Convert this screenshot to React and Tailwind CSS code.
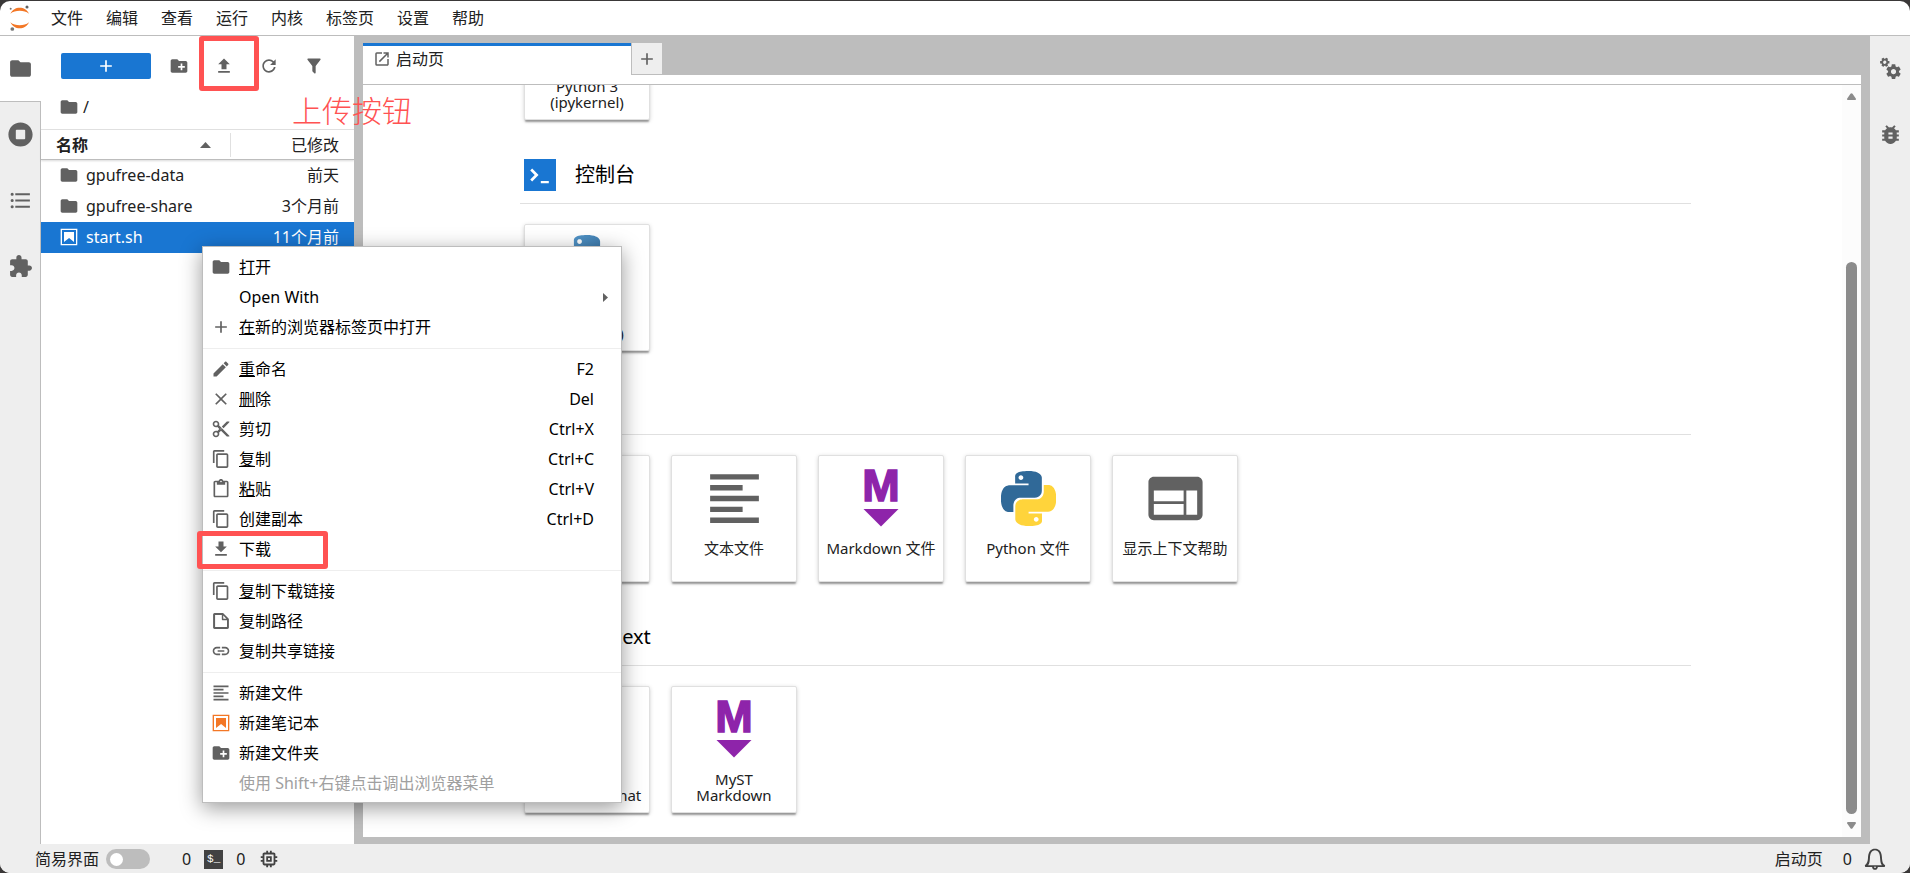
import React from "react";

const P = {
  folder: "M10 4H4c-1.1 0-1.99.9-1.99 2L2 18c0 1.1.9 2 2 2h16c1.1 0 2-.9 2-2V8c0-1.1-.9-2-2-2h-8l-2-2z",
  newFolder:
    "M20 6h-8l-2-2H4c-1.11 0-1.99.89-1.99 2L2 18c0 1.11.89 2 2 2h16c1.11 0 2-.89 2-2V8c0-1.11-.89-2-2-2zm-1 8h-3v3h-2v-3h-3v-2h3V9h2v3h3v2z",
  upload: "M9 16h6v-6h4l-7-7-7 7h4zm-4 2h14v2H5z",
  download: "M19 9h-4V3H9v6H5l7 7 7-7zM5 18v2h14v-2H5z",
  filter:
    "M14,12V19.88C14.04,20.18 13.94,20.5 13.71,20.71C13.32,21.1 12.69,21.1 12.3,20.71L10.29,18.7C10.06,18.47 9.96,18.16 10,17.87V12H9.97L4.21,4.62C3.87,4.19 3.95,3.56 4.38,3.22C4.57,3.08 4.78,3 5,3V3H19V3C19.22,3 19.43,3.08 19.62,3.22C20.05,3.56 20.13,4.19 19.79,4.62L14.03,12H14Z",
  launcher:
    "M19 19H5V5h7V3H5a2 2 0 00-2 2v14a2 2 0 002 2h14c1.1 0 2-.9 2-2v-7h-2v7zM14 3v2h3.59l-9.83 9.83 1.41 1.41L19 6.41V10h2V3h-7z",
  add: "M19 13h-6v6h-2v-6H5v-2h6V5h2v6h6v2z",
  toc: "M7,5H21V7H7V5M7,13V11H21V13H7M4,4.5A1.5,1.5 0 0,1 5.5,6A1.5,1.5 0 0,1 4,7.5A1.5,1.5 0 0,1 2.5,6A1.5,1.5 0 0,1 4,4.5M4,10.5A1.5,1.5 0 0,1 5.5,12A1.5,1.5 0 0,1 4,13.5A1.5,1.5 0 0,1 2.5,12A1.5,1.5 0 0,1 4,10.5M7,19V17H21V19H7M4,16.5A1.5,1.5 0 0,1 5.5,18A1.5,1.5 0 0,1 4,19.5A1.5,1.5 0 0,1 2.5,18A1.5,1.5 0 0,1 4,16.5Z",
  extension:
    "M20.5 11H19V7c0-1.1-.9-2-2-2h-4V3.5C13 2.12 11.88 1 10.5 1S8 2.12 8 3.5V5H4c-1.1 0-1.99.9-1.99 2v3.8H3.5c1.49 0 2.7 1.21 2.7 2.7s-1.21 2.7-2.7 2.7H2V20c0 1.1.9 2 2 2h3.8v-1.5c0-1.49 1.21-2.7 2.7-2.7 1.49 0 2.7 1.21 2.7 2.7V22H17c1.1 0 2-.9 2-2v-4h1.5c1.38 0 2.5-1.12 2.5-2.5S21.88 11 20.5 11z",
  edit: "M3 17.25V21h3.75L17.81 9.94l-3.75-3.75L3 17.25zM20.71 7.04c.39-.39.39-1.02 0-1.41l-2.34-2.34c-.39-.39-1.02-.39-1.41 0l-1.83 1.83 3.75 3.75 1.83-1.83z",
  close: "M19 6.41L17.59 5 12 10.59 6.41 5 5 6.41 10.59 12 5 17.59 6.41 19 12 13.41 17.59 19 19 17.59 13.41 12z",
  cut: "M9.64 7.64c.23-.5.36-1.05.36-1.64 0-2.21-1.79-4-4-4S2 3.79 2 6s1.79 4 4 4c.59 0 1.14-.13 1.64-.36L10 12l-2.36 2.36C7.14 14.13 6.59 14 6 14c-2.21 0-4 1.79-4 4s1.79 4 4 4 4-1.79 4-4c0-.59-.13-1.14-.36-1.64L12 14l7 7h3v-1L9.64 7.64zM6 8c-1.1 0-2-.89-2-2s.9-2 2-2 2 .89 2 2-.9 2-2 2zm0 12c-1.1 0-2-.89-2-2s.9-2 2-2 2 .89 2 2-.9 2-2 2zm6-7.5c-.28 0-.5-.22-.5-.5s.22-.5.5-.5.5.22.5.5-.22.5-.5.5zM19 3l-6 6 2 2 7-7V3z",
  paste:
    "M19 2h-4.18C14.4.84 13.3 0 12 0c-1.3 0-2.4.84-2.82 2H5c-1.1 0-2 .9-2 2v16c0 1.1.9 2 2 2h14c1.1 0 2-.9 2-2V4c0-1.1-.9-2-2-2zm-7 0c.55 0 1 .45 1 1s-.45 1-1 1-1-.45-1-1 .45-1 1-1zm7 18H5V4h2v3h10V4h2v16z",
  link: "M3.9 12c0-1.71 1.39-3.1 3.1-3.1h4V7H7c-2.76 0-5 2.24-5 5s2.24 5 5 5h4v-1.9H7c-1.71 0-3.1-1.39-3.1-3.1zM8 13h8v-2H8v2zm9-6h-4v1.9h4c1.71 0 3.1 1.39 3.1 3.1s-1.39 3.1-3.1 3.1h-4V17h4c2.76 0 5-2.24 5-5s-2.24-5-5-5z",
  lines: "M15 15H3v2h12v-2zm0-8H3v2h12V7zM3 13h18v-2H3v2zm0 8h18v-2H3v2zM3 3v2h18V3H3z",
  inspector:
    "M20 4H4c-1.1 0-1.99.9-1.99 2L2 18c0 1.1.9 2 2 2h16c1.1 0 2-.9 2-2V6c0-1.1-.9-2-2-2zm-5 14H4v-4h11v4zm0-5H4V9h11v4zm5 5h-4V9h4v9z",
  bug: "M20 8h-2.81c-.45-.78-1.07-1.45-1.82-1.96L17 4.41 15.59 3l-2.17 2.17C12.96 5.06 12.49 5 12 5c-.49 0-.96.06-1.41.17L8.41 3 7 4.41l1.62 1.63C7.88 6.55 7.26 7.22 6.81 8H4v2h2.09c-.05.33-.09.66-.09 1v1H4v2h2v1c0 .34.04.67.09 1H4v2h2.81c1.04 1.79 2.97 3 5.19 3s4.15-1.21 5.19-3H20v-2h-2.09c.05-.33.09-.66.09-1v-1h2v-2h-2v-1c0-.34-.04-.67-.09-1H20V8zm-6 8h-4v-2h4v2zm0-4h-4v-2h4v2z",
  chip: "M15 9H9v6h6V9zm-2 4h-2v-2h2v2zm8-2V9h-2V7c0-1.1-.9-2-2-2h-2V3h-2v2h-2V3H9v2H7c-1.1 0-2 .9-2 2v2H3v2h2v2H3v2h2v2c0 1.1.9 2 2 2h2v2h2v-2h2v2h2v-2h2c1.1 0 2-.9 2-2v-2h2v-2h-2v-2h2zm-4 6H7V7h10v10z",
};

const P18 = {
  refresh:
    "M9 13.5c-2.49 0-4.5-2.01-4.5-4.5S6.51 4.5 9 4.5c1.24 0 2.36.52 3.17 1.33L10 8h5V3l-1.76 1.76C12.15 3.68 10.66 3 9 3 5.69 3 3.01 5.69 3.01 9S5.69 15 9 15c2.97 0 5.43-2.16 5.9-5h-1.52c-.46 2-2.24 3.5-4.38 3.5z",
  copy: "M11.9,1H3.2C2.4,1,1.7,1.7,1.7,2.5v10.2h1.5V2.5h8.7V1z M14.1,3.9h-8c-0.8,0-1.5,0.7-1.5,1.5v10.2c0,0.8,0.7,1.5,1.5,1.5h8c0.8,0,1.5-0.7,1.5-1.5V5.4C15.5,4.6,14.9,3.9,14.1,3.9z M14.1,15.5h-8V5.4h8V15.5z",
};

const P22 = {
  file: "M19.3 8.2l-5.5-5.5c-.3-.3-.7-.5-1.2-.5H3.9c-.8.1-1.6.9-1.6 1.8v14.1c0 .9.7 1.6 1.6 1.6h14.2c.9 0 1.6-.7 1.6-1.6V9.4c.1-.5-.1-.9-.4-1.2zm-5.8-3.3l3.4 3.6h-3.4V4.9zm3.9 12.7H4.7c-.1 0-.2 0-.2-.2V4.7c0-.2.1-.3.2-.3h7.2v4.4s0 .8.3 1.1c.3.3 1.1.3 1.1.3h4.3v7.2s-.1.2-.2.2z",
  notebook:
    "M18.7 3.3v15.4H3.3V3.3h15.4m1.5-1.5H1.8v18.3h18.3l.1-18.3zM16.5 16.5l-5.4-4.3-5.6 4.3v-11h11z",
};

const GEAR =
  "M14.9 17.45C16.25 17.45 17.35 16.35 17.35 15C17.35 13.65 16.25 12.55 14.9 12.55C13.54 12.55 12.45 13.65 12.45 15C12.45 16.35 13.54 17.45 14.9 17.45ZM20.1 15.68L21.58 16.84C21.71 16.95 21.75 17.13 21.66 17.29L20.26 19.71C20.17 19.86 20 19.92 19.83 19.86L18.09 19.16C17.73 19.44 17.33 19.67 16.91 19.85L16.64 21.7C16.62 21.87 16.47 22 16.3 22H13.5C13.32 22 13.18 21.87 13.15 21.7L12.89 19.85C12.46 19.67 12.07 19.44 11.71 19.16L9.96 19.86C9.81 19.92 9.62 19.86 9.54 19.71L8.14 17.29C8.05 17.13 8.09 16.95 8.22 16.84L9.7 15.68L9.65 15L9.7 14.31L8.22 13.16C8.09 13.05 8.05 12.86 8.14 12.71L9.54 10.29C9.62 10.13 9.81 10.07 9.96 10.13L11.71 10.84C12.07 10.56 12.46 10.32 12.89 10.15L13.15 8.29C13.18 8.13 13.32 8 13.5 8H16.3C16.47 8 16.62 8.13 16.64 8.29L16.91 10.15C17.33 10.32 17.73 10.56 18.09 10.84L19.83 10.13C20 10.07 20.17 10.13 20.26 10.29L21.66 12.71C21.75 12.86 21.71 13.05 21.58 13.16L20.1 14.31L20.15 15L20.1 15.68Z";

function Icon({ name, className = "size-5 text-[#616161]" }) {
  const box = P[name] ? 24 : P18[name] ? 18 : 22;
  return (
    <svg viewBox={`0 0 ${box} ${box}`} className={`shrink-0 ${className}`} fill="currentColor" fillRule="evenodd" aria-hidden="true">
      <path d={P[name] || P18[name] || P22[name]} />
    </svg>
  );
}

function JupyterLogo() {
  return (
    <svg viewBox="0 0 66 78" className="h-[26px] w-[22px]" aria-hidden="true">
      <path d="M4 26C11 13 20 8 32 8s22 5 28 18C52 19 43 17 32 17S12 19 4 26z" fill="#f37726" />
      <path d="M4 52c7 13 16 18 28 18s22-5 28-18c-8 7-17 9-28 9s-20-2-28-9z" fill="#f37726" />
      <circle cx="54" cy="6" r="4.6" fill="#616161" />
      <circle cx="5" cy="11" r="3" fill="#757575" />
      <circle cx="10" cy="72" r="5.6" fill="#757575" />
    </svg>
  );
}

function PythonLogo({ className, soft }) {
  return (
    <svg viewBox="0 0 24 24" className={className} aria-hidden="true">
      <defs>
        <linearGradient id="pyBlue" x1="0" y1="0" x2="1" y2="1">
          <stop offset="0" stopColor="#5a9fd4" />
          <stop offset="1" stopColor="#306998" />
        </linearGradient>
      </defs>
      <path
        fill={soft ? "url(#pyBlue)" : "#306998"}
        d="M14.25.18l.9.2.73.26.59.3.45.32.34.34.25.34.16.33.1.3.04.26.02.2-.01.13V8.5l-.05.63-.13.55-.21.46-.26.38-.3.31-.33.25-.35.19-.35.14-.33.1-.3.07-.26.04-.21.02H8.77l-.69.05-.59.14-.5.22-.41.27-.33.32-.27.35-.2.36-.15.37-.1.35-.07.32-.04.27-.02.21v3.06H3.17l-.21-.03-.28-.07-.32-.12-.35-.18-.36-.26-.36-.36-.35-.46-.32-.59-.28-.73-.21-.88-.14-1.05-.05-1.23.06-1.22.16-1.04.24-.87.32-.71.36-.57.4-.44.42-.33.42-.24.4-.16.36-.1.32-.05.24-.01h.16l.06.01h8.16v-.83H6.18l-.01-2.75-.02-.37.05-.34.11-.31.17-.28.25-.26.31-.23.38-.2.44-.18.51-.15.58-.12.64-.1.71-.06.77-.04.84-.02 1.27.05zm-6.3 1.98l-.23.33-.08.41.08.41.23.34.33.22.41.09.41-.09.33-.22.23-.34.08-.41-.08-.41-.23-.33-.33-.22-.41-.09-.41.09z"
      />
      <path
        fill="#ffd43b"
        d="M21.1 6.11l.28.06.32.12.35.18.36.27.36.35.35.47.32.59.28.73.21.88.14 1.04.05 1.23-.06 1.23-.16 1.04-.24.86-.32.71-.36.57-.4.45-.42.33-.42.24-.4.16-.36.09-.32.05-.24.02-.16-.01h-8.22v.82h5.84l.01 2.76.02.36-.05.34-.11.31-.17.29-.25.25-.31.24-.38.2-.44.17-.51.15-.58.13-.64.09-.71.07-.77.04-.84.01-1.27-.04-1.07-.14-.9-.2-.73-.25-.59-.3-.45-.33-.34-.34-.25-.34-.16-.33-.1-.3-.04-.25-.02-.2.01-.13v-5.34l.05-.64.13-.54.21-.46.26-.38.3-.32.33-.24.35-.2.35-.14.33-.1.3-.06.26-.04.21-.02.13-.01h5.84l.69-.05.59-.14.5-.21.41-.28.33-.32.27-.35.2-.36.15-.36.1-.35.07-.32.04-.28.02-.21V6.07h2.09l.14.01zm-6.47 14.25l-.23.33-.08.41.08.41.23.33.33.23.41.08.41-.08.33-.23.23-.33.08-.41-.08-.41-.23-.33-.33-.23-.41-.08-.41.08z"
      />
    </svg>
  );
}

function MarkdownLogo() {
  return (
    <svg viewBox="0 -10 60 80" className="h-20 w-[60px]" fill="#8e24aa" aria-hidden="true">
      <text
        x="30"
        y="33"
        textAnchor="middle"
        fontFamily="'Liberation Sans', Arial, sans-serif"
        fontWeight="700"
        fontSize="45"
        stroke="#8e24aa"
        strokeWidth="1.5"
      >
        M
      </text>
      <path d="M12.500 41h35L30 58.500z" />
    </svg>
  );
}

function ConsoleBadge() {
  return (
    <svg viewBox="0 0 200 200" className="size-8" aria-hidden="true">
      <path fill="#1976d2" d="M0 0h200v200H0z" />
      <path fill="#fff" d="M105 137h50v14h-50zM39 72l28 28-28 28 12 12 40-40-40-40z" />
    </svg>
  );
}

function Card({ icon, children }) {
  return (
    <button
      type="button"
      className="flex h-[127px] w-[126px] shrink-0 flex-col items-center rounded-[2px] border border-[#e0e0e0] bg-white shadow-[0_3px_2px_-1px_rgba(0,0,0,0.35),0_1px_4px_rgba(0,0,0,0.16)]"
    >
      <span className="flex h-[84px] items-center justify-center">{icon}</span>
      <span className="w-full text-center text-[15px] leading-4 whitespace-pre-line">{children}</span>
    </button>
  );
}

function Section({ icon, title, children }) {
  return (
    <section className="mt-[39px]">
      <div className="flex items-center gap-[19px] border-b border-[#e0e0e0] pb-3 pl-1">
        <span className="flex size-8 items-center justify-center">{icon}</span>
        <h2 className="text-xl leading-8 text-black">{title}</h2>
      </div>
      <div className="mt-5 flex gap-[21px] pl-1">{children}</div>
    </section>
  );
}

const menus = ["文件", "编辑", "查看", "运行", "内核", "标签页", "设置", "帮助"];

const contextGroups = [
  [
    { icon: "folder", key: "打", label: "开" },
    { label: "Open With", submenu: true },
    { icon: "add", key: "在", label: "新的浏览器标签页中打开" },
  ],
  [
    { icon: "edit", key: "重", label: "命名", shortcut: "F2" },
    { icon: "close", key: "删", label: "除", shortcut: "Del" },
    { icon: "cut", label: "剪切", shortcut: "Ctrl+X" },
    { icon: "copy", key: "复", label: "制", shortcut: "Ctrl+C" },
    { icon: "paste", key: "粘", label: "贴", shortcut: "Ctrl+V" },
    { icon: "copy", label: "创建副本", shortcut: "Ctrl+D" },
    { icon: "download", label: "下载" },
  ],
  [
    { icon: "copy", key: "复", label: "制下载链接" },
    { icon: "file", label: "复制路径" },
    { icon: "link", label: "复制共享链接" },
  ],
  [
    { icon: "lines", label: "新建文件" },
    { icon: "notebook", label: "新建笔记本", orange: true },
    { icon: "newFolder", label: "新建文件夹" },
    { label: "使用 Shift+右键点击调出浏览器菜单", disabled: true },
  ],
];

function ContextMenu() {
  return (
    <div className="absolute top-[246px] left-[202px] z-20 w-[420px] border border-[#bdbdbd] bg-white pt-[5px] pb-1 text-black shadow-[0_5px_20px_rgba(0,0,0,0.4)]">
      {contextGroups.map((group, g) => (
        <div key={g}>
          {g > 0 && (
            <div className="flex h-3 items-center">
              <hr className="w-full border-[#eeeeee]" />
            </div>
          )}
          {group.map((item) => (
            <button
              key={item.label}
              type="button"
              disabled={item.disabled}
              className={`flex h-[30px] w-full items-center pr-[13px] pl-[8px] text-left text-base ${item.disabled ? "text-[#a0a0a0]" : ""}`}
            >
              <span className="flex w-[28px] shrink-0">
                {item.icon && (
                  <Icon name={item.icon} className={item.orange ? "size-5 text-[#f37726]" : "size-5 text-[#616161]"} />
                )}
              </span>
              <span className="flex-1">
                {item.key && <span className="underline">{item.key}</span>}
                {item.label}
              </span>
              <span className="mr-[14px]">{item.shortcut}</span>
              {item.submenu && (
                <svg viewBox="0 0 5 9" className="h-[9px] w-[5px] text-[#616161]" fill="currentColor" aria-hidden="true">
                  <path d="M0 0l5 4.500L0 9z" />
                </svg>
              )}
            </button>
          ))}
        </div>
      ))}
    </div>
  );
}

const files = [
  { name: "gpufree-data", time: "前天", icon: "folder" },
  { name: "gpufree-share", time: "3个月前", icon: "folder" },
  { name: "start.sh", time: "11个月前", icon: "notebook", selected: true },
];

function FileBrowser() {
  return (
    <aside className="flex w-[313px] shrink-0 flex-col bg-white">
      <div className="flex items-center pt-[17px] pl-5">
        <button type="button" aria-label="新建启动页" className="mr-[18px] flex h-[26px] w-[90px] items-center justify-center rounded-[2px] bg-[#1976d2]">
          <Icon name="add" className="size-5 text-white" />
        </button>
        <div className="flex gap-[25px]">
          <button type="button" aria-label="新建文件夹"><Icon name="newFolder" /></button>
          <button type="button" aria-label="上传"><Icon name="upload" /></button>
          <button type="button" aria-label="刷新"><Icon name="refresh" /></button>
          <button type="button" aria-label="筛选"><Icon name="filter" /></button>
        </div>
      </div>
      <a href="#root" className="mt-4 flex h-6 items-center gap-1 pl-[18px]">
        <Icon name="folder" />
        <span>/</span>
      </a>
      <table className="mt-[10px] w-full table-fixed border-collapse border-t border-[#e0e0e0]">
        <thead>
          <tr className="h-[30px] border-b border-[#bdbdbd] shadow-[0_1px_2px_rgba(0,0,0,0.15)]">
            <th className="w-[190px] p-0 text-left">
              <div className="flex h-6 items-center justify-between border-r border-[#e0e0e0] pr-[19px] pl-[15px]">
                <span className="font-bold">名称</span>
                <svg viewBox="0 0 11 6" className="h-[6px] w-[11px] text-[#616161]" fill="currentColor" aria-hidden="true">
                  <path d="M0 6l5.500-6L11 6z" />
                </svg>
              </div>
            </th>
            <th className="p-0 pr-[15px] text-right font-normal">已修改</th>
          </tr>
        </thead>
        <tbody>
          {files.map((f) => (
            <tr key={f.name} className={`h-[31px] ${f.selected ? "bg-[#1976d2] text-white" : ""}`}>
              <td className="p-0 pl-[18px]">
                <div className="flex items-center gap-[7px]">
                  <Icon name={f.icon} className={f.selected ? "size-5 text-white" : "size-5 text-[#616161]"} />
                  {f.name}
                </div>
              </td>
              <td className="p-0 pr-[15px] text-right">{f.time}</td>
            </tr>
          ))}
        </tbody>
      </table>
    </aside>
  );
}

function LeftRail() {
  const tab = "flex h-[66px] w-full shrink-0 items-center justify-center border-r border-[#bdbdbd] pb-[2px]";
  return (
    <nav className="flex w-[41px] shrink-0 flex-col bg-[#eeeeee]">
      <button type="button" aria-label="文件浏览器" className="flex h-[66px] w-full items-center justify-center border-b border-[#bdbdbd] bg-white">
        <Icon name="folder" className="size-[25px] text-[#616161]" />
      </button>
      <button type="button" aria-label="运行的终端和内核" className={tab}>
        <svg viewBox="0 0 512 512" className="size-[25px] text-[#616161]" fill="currentColor" aria-hidden="true">
          <path d="M256 8C119 8 8 119 8 256s111 248 248 248 248-111 248-248S393 8 256 8zm96 328c0 8.800-7.200 16-16 16H176c-8.800 0-16-7.200-16-16V176c0-8.800 7.200-16 16-16h160c8.800 0 16 7.200 16 16v160z" />
        </svg>
      </button>
      <button type="button" aria-label="目录" className={tab}>
        <Icon name="toc" className="size-[25px] text-[#616161]" />
      </button>
      <button type="button" aria-label="扩展管理" className={tab}>
        <Icon name="extension" className="size-[25px] text-[#616161]" />
      </button>
      <div className="flex-1 border-r border-[#bdbdbd]" />
    </nav>
  );
}

function RightRail() {
  return (
    <nav className="flex w-10 shrink-0 flex-col bg-[#eeeeee]">
      <button type="button" aria-label="属性检查器" className="flex h-[66px] items-center justify-center pb-[2px]">
        <svg viewBox="0 0 24 24" className="size-[25px] text-[#616161]" fill="currentColor" fillRule="evenodd" aria-hidden="true">
          <path d={GEAR} />
          <path d={GEAR} transform="translate(6.500 6) rotate(30) scale(0.640) translate(-14.900 -15)" />
        </svg>
      </button>
      <button type="button" aria-label="调试器" className="flex h-[66px] items-center justify-center pb-[2px]">
        <Icon name="bug" className="size-[25px] text-[#616161]" />
      </button>
    </nav>
  );
}

function Launcher() {
  return (
    <div className="flex min-h-0 flex-1 bg-white">
      <div className="min-w-0 flex-1 overflow-hidden pr-[151px] pl-[157px]">
        <div className="-mt-[92px] flex pl-1">
          <Card icon={<PythonLogo soft className="mb-[10px] size-[54px]" />}>{"Python 3\n(ipykernel)"}</Card>
        </div>
        <Section icon={<ConsoleBadge />} title="控制台">
          <Card icon={<PythonLogo soft className="mb-[10px] size-[54px]" />}>{"Python 3\n(ipykernel)"}</Card>
        </Section>
        <Section title="其他">
          <Card>终端</Card>
          <Card icon={<Icon name="lines" className="size-[65px] text-[#616161]" />}>文本文件</Card>
          <Card icon={<MarkdownLogo />}>Markdown 文件</Card>
          <Card icon={<PythonLogo className="size-[55px]" />}>Python 文件</Card>
          <Card icon={<Icon name="inspector" className="size-[65px] text-[#616161]" />}>显示上下文帮助</Card>
        </Section>
        <Section title="Jupytext">
          <Card>{"New\nPercent Format"}</Card>
          <Card icon={<MarkdownLogo />}>{"MyST\nMarkdown"}</Card>
        </Section>
      </div>
      <div className="flex w-[19px] flex-col items-center bg-[#fcfcfc] pt-2 pb-2 text-[#8b8b8b]">
        <svg viewBox="0 0 9 7" className="h-[7px] w-[9px]" fill="currentColor" aria-hidden="true">
          <path d="M3.500 .8Q4.500-.5 5.500.8L8.800 5.500Q9.200 7 8 7H1Q-.2 7 .2 5.500z" />
        </svg>
        <div className="mt-[162px] mb-2 w-[11px] flex-1 rounded-full bg-[#8b8b8b]" />
        <svg viewBox="0 0 9 7" className="h-[7px] w-[9px]" fill="currentColor" aria-hidden="true">
          <path d="M3.500 6.200Q4.500 7.500 5.500 6.200L8.800 1.500Q9.200 0 8 0H1Q-.2 0 .2 1.500z" />
        </svg>
      </div>
    </div>
  );
}

function StatusBar() {
  return (
    <footer className="flex h-[29px] shrink-0 items-center justify-between bg-[#eeeeee] pt-px pr-6 pl-[35px]">
      <div className="flex items-center">
        <span id="simple-mode">简易界面</span>
        <button type="button" role="switch" aria-checked="false" aria-labelledby="simple-mode" className="ml-[7px] flex h-5 w-11 items-center rounded-full bg-[#bdbdbd] px-1">
          <span className="size-[13px] rounded-full bg-white" />
        </button>
        <span className="ml-8">0</span>
        <span className="ml-[13px] flex size-[19px] items-center justify-center bg-[#424242] font-['Liberation_Mono',monospace] text-[11px] leading-none text-white">
          $_
        </span>
        <span className="ml-[13px]">0</span>
        <Icon name="chip" className="ml-[13px] size-[22px] text-[#424242]" />
      </div>
      <div className="flex items-center">
        <span>启动页</span>
        <span className="ml-5">0</span>
        <button type="button" aria-label="通知" className="ml-3">
          <svg viewBox="0 0 16 16" className="size-[22px] text-[#424242]" fill="currentColor" aria-hidden="true">
            <path d="M8 .290c-1.400 0-2.700.730-3.600 1.800-1.200 1.500-1.400 3.400-1.500 5.200-.180 2.200-.440 4-2.300 5.300l.280 1.300h5c.026.660.320 1.100.710 1.500.840.610 2 .610 2.800 0 .520-.400.600-1 .710-1.500h5l.280-1.300c-1.900-.970-2.200-3.300-2.300-5.300-.130-1.800-.260-3.700-1.500-5.200-.850-1-2.200-1.800-3.600-1.800zm0 1.400c.880 0 1.900.550 2.500 1.300.880 1.100 1.100 2.700 1.200 4.400.130 1.700.230 3.600 1.300 5.200h-10c1.100-1.600 1.200-3.400 1.300-5.200.130-1.700.300-3.300 1.200-4.400.590-.720 1.600-1.300 2.500-1.300zm-.740 12h1.500c-.002.280.015.790-.740.790-.730.002-.720-.530-.740-.790z" />
          </svg>
        </button>
      </div>
    </footer>
  );
}

export default function App() {
  return (
    <div className="relative h-screen overflow-hidden bg-[#3a3838] pt-px font-['Noto_Sans','Noto_Sans_CJK_SC',sans-serif] text-base leading-6 text-[#212121]">
      <div className="flex h-full flex-col overflow-hidden rounded-[10px] bg-white">
        <header className="flex h-[35px] shrink-0 items-center border-b border-[#bdbdbd] pl-[9px]">
          <JupyterLogo />
          <nav className="ml-5 flex gap-[23px]">
            {menus.map((m) => (
              <button key={m} type="button">{m}</button>
            ))}
          </nav>
        </header>
        <div className="flex min-h-0 flex-1">
          <LeftRail />
          <FileBrowser />
          <main className="flex min-w-0 flex-1 flex-col bg-[#bdbdbd] px-[9px] pt-[7px] pb-[7px]">
            <div className="flex h-8 shrink-0">
              <button type="button" className="flex w-[268px] items-center gap-[5px] border-t-3 border-[#1976d2] bg-white pb-1 pl-[10px] text-left">
                <Icon name="launcher" className="size-[18px] text-[#616161]" />
                启动页
              </button>
              <button type="button" aria-label="新启动页" className="flex w-[31px] items-center justify-center border-b border-l border-[#bdbdbd] bg-[#eeeeee]">
                <Icon name="add" />
              </button>
            </div>
            <div className="h-[10px] shrink-0 border-b border-[#bdbdbd] bg-white" />
            <Launcher />
          </main>
          <RightRail />
        </div>
        <StatusBar />
      </div>

      <ContextMenu />

      <div className="absolute top-[36px] left-[199px] z-30 h-[55px] w-[60px] rounded-[3px] border-5 border-[#ff5252]" />
      <div className="absolute top-[531px] left-[197px] z-30 h-[38px] w-[131px] rounded-[3px] border-5 border-[#ff5252]" />
      <p className="absolute top-[91px] left-[292px] z-30 text-[30px] leading-10 font-light text-[#ff5252]">上传按钮</p>
    </div>
  );
}
